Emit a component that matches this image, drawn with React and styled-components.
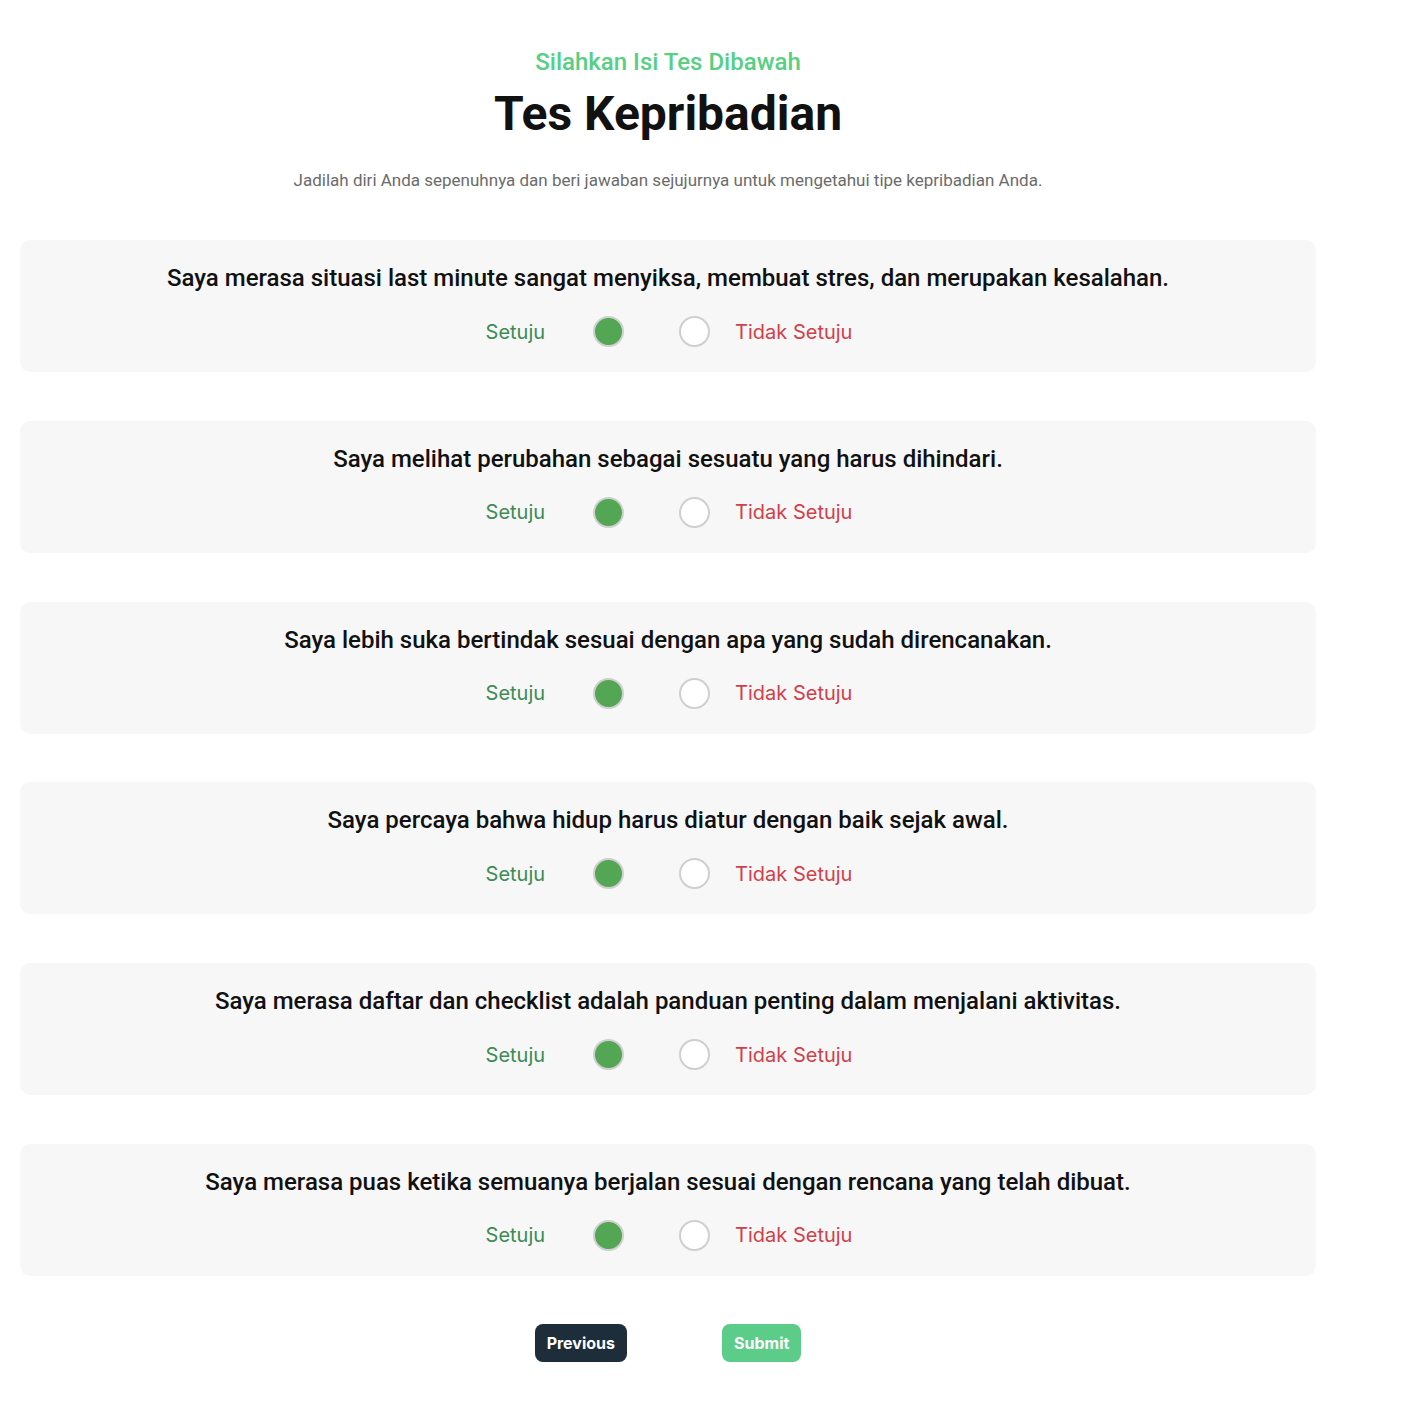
import React, { useState } from "react"
import styled, { createGlobalStyle } from "styled-components"

const Global = createGlobalStyle`
  body {
    margin: 0;
    background: #ffffff;
    font-family: Roboto, "Liberation Sans", sans-serif;
  }
`

const Page = styled.div`
  width: 1336px;
  padding: 48px 20px 48px;
  box-sizing: border-box;
`

const Header = styled.header`
  display: flex;
  flex-direction: column;
  align-items: center;
  text-align: center;
`

const Eyebrow = styled.div`
  color: #57cf85;
  font-size: 24px;
  font-weight: 500;
  line-height: 28px;
`

const Title = styled.h1`
  margin: 10px 0 0;
  font-size: 48px;
  font-weight: 700;
  line-height: 56px;
  color: #111111;
`

const Lead = styled.p`
  margin: 28px 0 0;
  font-size: 17px;
  line-height: 20px;
  color: #6b6b6b;
`

const List = styled.div`
  margin-top: 50px;
  display: flex;
  flex-direction: column;
  gap: 48.8px;
`

const Card = styled.section`
  background: #f7f7f7;
  border-radius: 10px;
  padding: 24px 20px 25px;
  display: flex;
  flex-direction: column;
  align-items: center;
  gap: 24px;
`

const Question = styled.h3`
  margin: 0;
  font-size: 24px;
  font-weight: 500;
  line-height: 28px;
  color: #111111;
  text-align: center;
`

const Options = styled.div`
  display: flex;
  align-items: center;
  padding-left: 2px;
  font-family: Inter, "Noto Sans", sans-serif;
  font-size: 20px;
`

const Label = styled.span`
  color: ${p => (p.$tone === "agree" ? "#3d8b55" : "#d1404a")};
`

const Radio = styled.button`
  width: 31px;
  height: 31px;
  padding: 0;
  border-radius: 50%;
  border: 2px solid #cfcfcf;
  background: ${p => (p.$checked ? "#53a653" : "#ffffff")};
  cursor: pointer;
  margin: ${p => p.$margin};
`

const Nav = styled.div`
  margin-top: 48px;
  display: flex;
  justify-content: center;
  gap: 95px;
`

const Button = styled.button`
  height: 38px;
  padding: 0 12px;
  border: none;
  border-radius: 8px;
  font-family: Inter, "Noto Sans", sans-serif;
  font-size: 16px;
  font-weight: 700;
  color: #ffffff;
  background: ${p => (p.$variant === "primary" ? "#5ccd89" : "#1e2d3a")};
  cursor: pointer;
`

const questions = [
  "Saya merasa situasi last minute sangat menyiksa, membuat stres, dan merupakan kesalahan.",
  "Saya melihat perubahan sebagai sesuatu yang harus dihindari.",
  "Saya lebih suka bertindak sesuai dengan apa yang sudah direncanakan.",
  "Saya percaya bahwa hidup harus diatur dengan baik sejak awal.",
  "Saya merasa daftar dan checklist adalah panduan penting dalam menjalani aktivitas.",
  "Saya merasa puas ketika semuanya berjalan sesuai dengan rencana yang telah dibuat.",
]

const App = () => {
  const [answers, setAnswers] = useState(questions.map(() => "agree"))
  const pick = (i, v) => setAnswers(a => a.map((x, j) => (j === i ? v : x)))

  return (
    <Page>
      <Global />
      <Header>
        <Eyebrow>Silahkan Isi Tes Dibawah</Eyebrow>
        <Title>Tes Kepribadian</Title>
        <Lead>
          Jadilah diri Anda sepenuhnya dan beri jawaban sejujurnya untuk mengetahui tipe kepribadian Anda.
        </Lead>
      </Header>
      <List>
        {questions.map((q, i) => (
          <Card key={i}>
            <Question>{q}</Question>
            <Options>
              <Label $tone="agree">Setuju</Label>
              <Radio
                $margin="0 0 0 48px"
                $checked={answers[i] === "agree"}
                onClick={() => pick(i, "agree")}
                aria-label="Setuju"
              />
              <Radio
                $margin="0 25px 0 55px"
                $checked={answers[i] === "disagree"}
                onClick={() => pick(i, "disagree")}
                aria-label="Tidak Setuju"
              />
              <Label $tone="disagree">Tidak Setuju</Label>
            </Options>
          </Card>
        ))}
      </List>
      <Nav>
        <Button>Previous</Button>
        <Button $variant="primary">Submit</Button>
      </Nav>
    </Page>
  )
}

export default App
